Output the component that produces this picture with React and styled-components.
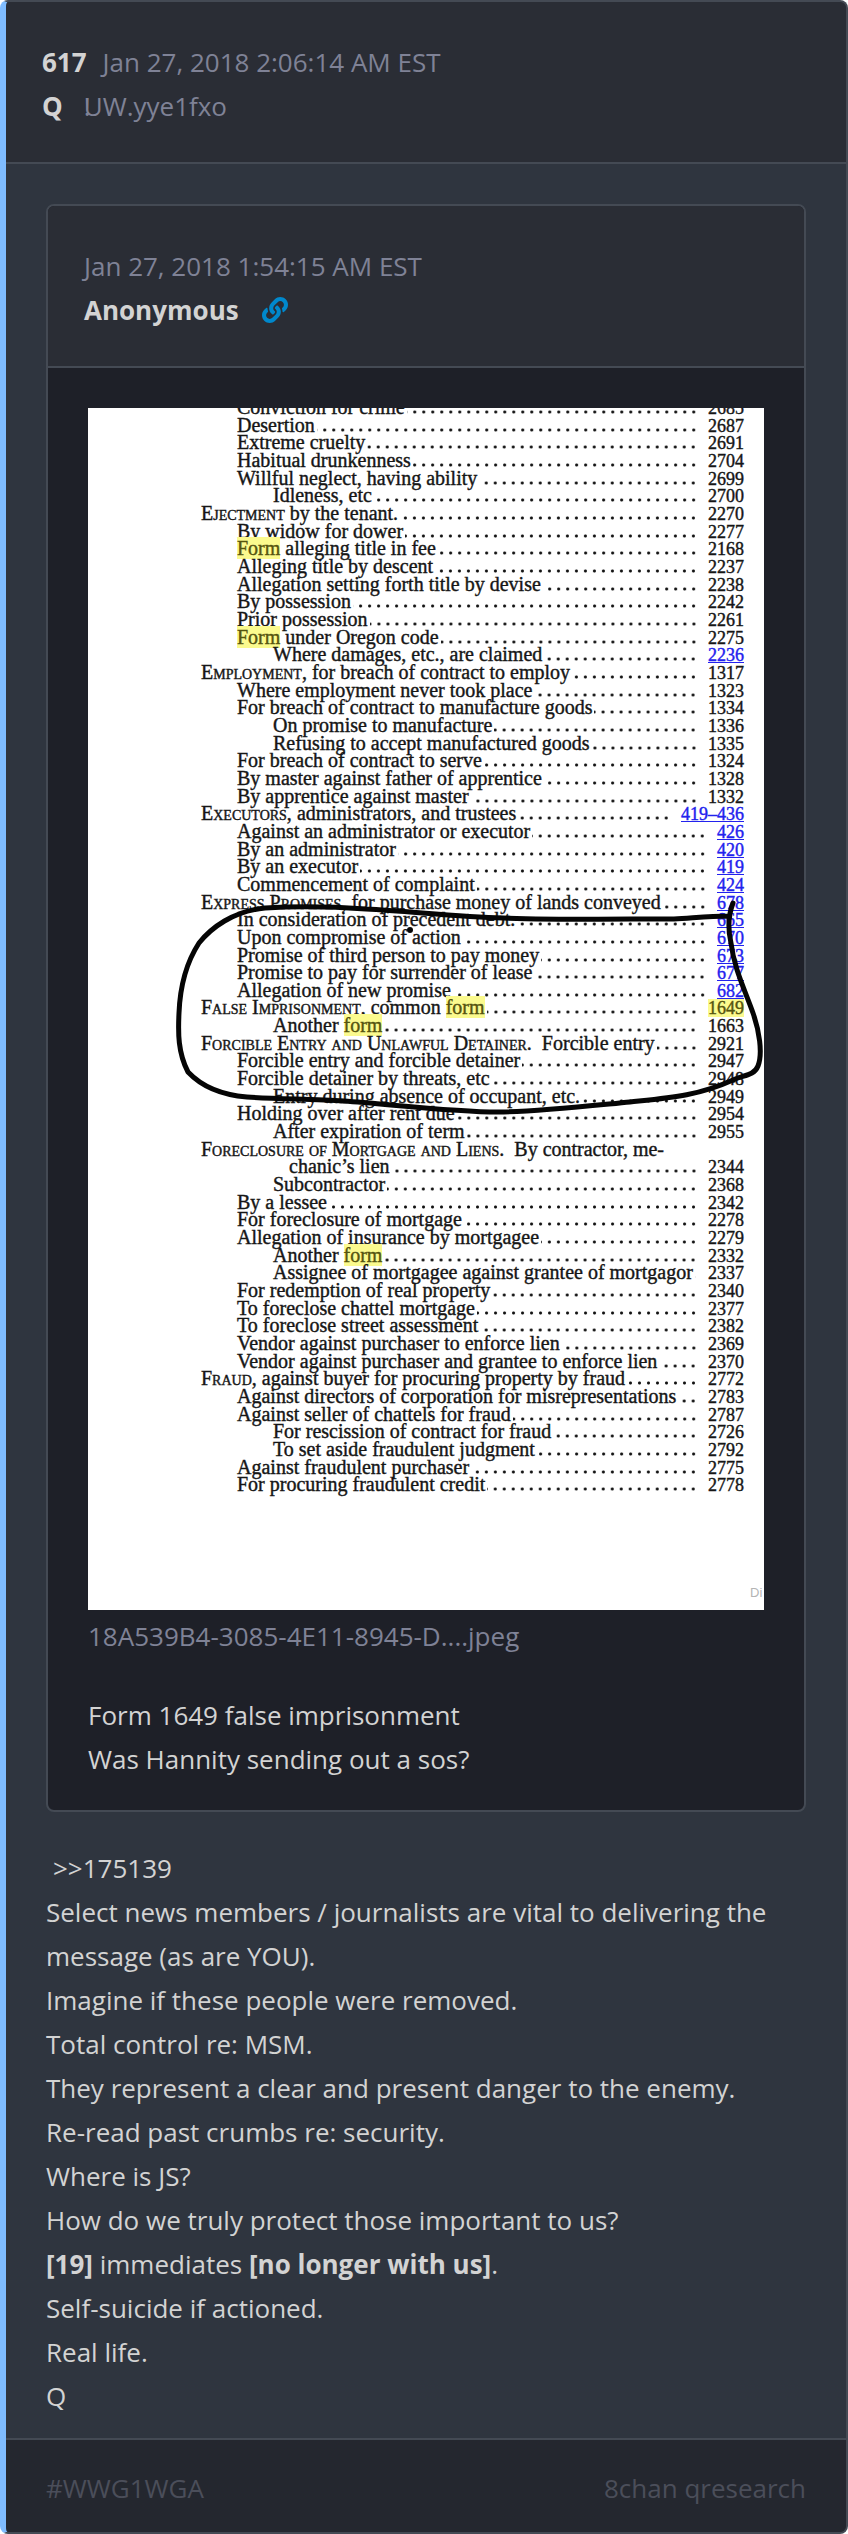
import React from "react";
import styled, { createGlobalStyle, css } from "styled-components";
import { FaLink } from "react-icons/fa";

const line = "#444a54";

const GlobalStyle = createGlobalStyle`
  *, *::before, *::after { box-sizing: border-box; }
  body {
    margin: 0;
    background: #fff;
    color: #d3d3d3;
    font-family: "Open Sans", "Noto Sans", sans-serif;
    font-size: 26px;
    line-height: 44px;
  }
`;

const Post = styled.article`
  border: 2px solid ${line};
  border-left: 6px solid #7fbcff;
  border-radius: 8px;
  background: #2f353f;
  overflow: hidden;
`;

const Header = styled.header`
  padding: 38px 36px 34px;
  background: #2a2d35;
  border-bottom: 2px solid ${line};
`;

const HeaderLine = styled.div`
  display: flex;
  align-items: center;
  gap: ${(p) => p.$gap || 0}px;
`;

const Tripcode = styled.span`
  color: #7f8296;
`;

const Bang = styled.span`
  display: inline-block;
  width: 0;
`;

const Time = styled.time`
  color: #7f8296;
`;

const SourceLink = styled.a`
  display: flex;
  color: #0088cc;
`;

const Body = styled.div`
  padding: 40px 40px 20px;
`;

const Quote = styled.section`
  border: 2px solid ${line};
  border-radius: 8px;
  background: #1e2028;
  overflow: hidden;
  margin-bottom: 34px;
`;

const QuoteBody = styled.div`
  padding: 40px 40px 29px;
`;

const Figure = styled.figure`
  margin: 0 0 35px;
`;

const Caption = styled.figcaption`
  padding-top: 4px;
  color: #7f8296;
`;

const Text = styled.p`
  margin: 0;
`;

const Reference = styled.span`
  padding-left: 7px;
`;

const Footer = styled.footer`
  display: flex;
  justify-content: space-between;
  padding: 26px 40px 22px;
  background: #24272f;
  border-top: 2px solid ${line};
  color: #4b4e5a;
`;

const Sheet = styled.div`
  position: relative;
  display: flex;
  flex-direction: column;
  height: 1202px;
  overflow: hidden;
  background: #fff;
  color: #161616;
  font-family: "Liberation Serif", serif;
  font-size: 18px;
  line-height: 18px;
`;

const Index = styled.ol`
  display: grid;
  grid-template-rows: repeat(62, 1fr);
  height: 1095px;
  margin: -10px 0 0;
  padding: 0 20px 0 113px;
  list-style: none;
`;

const indents = [0, 36, 72, 88];

const Entry = styled.li`
  display: flex;
  align-items: baseline;
  min-height: 0;
  padding-left: ${(p) => indents[p.$level]}px;
  white-space: nowrap;
  -webkit-text-stroke: 0.4px currentColor;
`;

const Title = styled.span`
  font-size: 20px;
`;

const Leader = styled.span`
  flex: 1;
  align-self: stretch;
  margin: 0 10px 0 2px;
  ${(p) =>
    !p.$blank &&
    css`
      background: radial-gradient(circle, #111 1px, transparent 2px) right 11px / 9px 6px repeat-x;
    `}
`;

const Caps = styled.span`
  font-variant: small-caps;
`;

const Mark = styled.mark`
  background: #fbfa8e;
  color: #55540f;
`;

const PageLink = styled.a`
  color: #2222ee;
`;

const Ink = styled.svg`
  position: absolute;
  top: 0;
  left: 0;
`;

const Watermark = styled.span`
  align-self: flex-end;
  width: 14px;
  margin: auto 0 8px;
  color: #b4b4b4;
  font-family: "Liberation Sans", sans-serif;
  font-size: 13px;
`;

const entries = [
  [1, "Conviction for crime", "2685"],
  [1, "Desertion", "2687"],
  [1, "Extreme cruelty", "2691"],
  [1, "Habitual drunkenness", "2704"],
  [1, "Willful neglect, having ability", "2699"],
  [2, "Idleness, etc", "2700"],
  [0, <><Caps>Ejectment</Caps> by the tenant.</>, "2270"],
  [1, "By widow for dower", "2277"],
  [1, <><Mark>Form</Mark> alleging title in fee</>, "2168"],
  [1, "Alleging title by descent", "2237"],
  [1, "Allegation setting forth title by devise", "2238"],
  [1, "By possession", "2242"],
  [1, "Prior possession", "2261"],
  [1, <><Mark>Form</Mark> under Oregon code</>, "2275"],
  [2, "Where damages, etc., are claimed", "2236", "link"],
  [0, <><Caps>Employment,</Caps> for breach of contract to employ</>, "1317"],
  [1, "Where employment never took place", "1323"],
  [1, "For breach of contract to manufacture goods", "1334"],
  [2, "On promise to manufacture", "1336"],
  [2, "Refusing to accept manufactured goods", "1335"],
  [1, "For breach of contract to serve", "1324"],
  [1, "By master against father of apprentice", "1328"],
  [1, "By apprentice against master", "1332"],
  [0, <><Caps>Executors,</Caps> administrators, and trustees</>, "419–436", "link"],
  [1, "Against an administrator or executor", "426", "link"],
  [1, "By an administrator", "420", "link"],
  [1, "By an executor", "419", "link"],
  [1, "Commencement of complaint", "424", "link"],
  [0, <><Caps>Express Promises,</Caps> for purchase money of lands conveyed</>, "678", "link"],
  [1, "In consideration of precedent debt.", "665", "link"],
  [1, "Upon compromise of action", "670", "link"],
  [1, "Promise of third person to pay money", "673", "link"],
  [1, "Promise to pay for surrender of lease", "677", "link"],
  [1, "Allegation of new promise", "682", "link"],
  [0, <><Caps>False Imprisonment,</Caps> common <Mark>form</Mark></>, "1649", "mark"],
  [2, <>Another <Mark>form</Mark></>, "1663"],
  [0, <><Caps>Forcible Entry and Unlawful Detainer.</Caps>&nbsp; Forcible entry</>, "2921"],
  [1, "Forcible entry and forcible detainer", "2947"],
  [1, "Forcible detainer by threats, etc", "2948"],
  [2, "Entry during absence of occupant, etc.", "2949"],
  [1, "Holding over after rent due", "2954"],
  [2, "After expiration of term", "2955"],
  [0, <><Caps>Foreclosure of Mortgage and Liens.</Caps>&nbsp; By contractor, me-</>, ""],
  [3, "chanic’s lien", "2344"],
  [2, "Subcontractor", "2368"],
  [1, "By a lessee", "2342"],
  [1, "For foreclosure of mortgage", "2278"],
  [1, "Allegation of insurance by mortgagee", "2279"],
  [2, <>Another <Mark>form</Mark></>, "2332"],
  [2, "Assignee of mortgagee against grantee of mortgagor", "2337"],
  [1, "For redemption of real property", "2340"],
  [1, "To foreclose chattel mortgage", "2377"],
  [1, "To foreclose street assessment", "2382"],
  [1, "Vendor against purchaser to enforce lien", "2369"],
  [1, "Vendor against purchaser and grantee to enforce lien", "2370"],
  [0, <><Caps>Fraud,</Caps> against buyer for procuring property by fraud</>, "2772"],
  [1, "Against directors of corporation for misrepresentations", "2783"],
  [1, "Against seller of chattels for fraud", "2787"],
  [2, "For rescission of contract for fraud", "2726"],
  [2, "To set aside fraudulent judgment", "2792"],
  [1, "Against fraudulent purchaser", "2775"],
  [1, "For procuring fraudulent credit", "2778"],
];

function PageNumber({ kind, children }) {
  if (kind === "link") return <PageLink href="#page">{children}</PageLink>;
  if (kind === "mark") return <Mark>{children}</Mark>;
  return <span>{children}</span>;
}

function ScannedPage() {
  return (
    <Sheet>
      <Index>
        {entries.map(([level, title, page, kind], i) => (
          <Entry key={i} $level={level}>
            <Title>{title}</Title>
            <Leader $blank={!page} />
            <PageNumber kind={kind}>{page}</PageNumber>
          </Entry>
        ))}
      </Index>
      <Watermark>Di</Watermark>
      <Ink width="676" height="1202" viewBox="0 0 676 1202" fill="none" aria-hidden="true">
        <path
          d="M645 495 C640 508 640 522 643 535 C646 560 656 580 665 605 C671 622 675 645 670 658 C666 668 655 667 645 672 C610 688 580 690 542 694 C510 697 450 704 410 704 C365 704 300 696 256 693 C225 691 190 691 159 689 C135 687 115 680 100 664 C90 645 90 625 91 605 C92 580 98 555 111 535 C123 520 145 503 177 500 C210 498 250 499 278 501 C320 503 370 509 415 510 C470 512 530 511 586 511 C605 510 620 508 641 508"
          stroke="#050505"
          strokeWidth="5"
          strokeLinecap="round"
          strokeLinejoin="round"
        />
        <circle cx="322" cy="522" r="3" fill="#050505" />
      </Ink>
    </Sheet>
  );
}

export default function App() {
  return (
    <>
      <GlobalStyle />
      <Post>
        <Header>
          <HeaderLine $gap={16}>
            <strong>617</strong>
            <Time dateTime="2018-01-27T02:06:14-05:00">Jan 27, 2018 2:06:14 AM EST</Time>
          </HeaderLine>
          <HeaderLine $gap={21}>
            <strong>Q</strong>
            <Tripcode><Bang>!</Bang>UW.yye1fxo</Tripcode>
          </HeaderLine>
        </Header>
        <Body>
          <Quote>
            <Header>
              <HeaderLine>
                <Time dateTime="2018-01-27T01:54:15-05:00">Jan 27, 2018 1:54:15 AM EST</Time>
              </HeaderLine>
              <HeaderLine $gap={23}>
                <strong>Anonymous</strong>
                <SourceLink href="#175139" aria-label="Link to post">
                  <FaLink size={26} />
                </SourceLink>
              </HeaderLine>
            </Header>
            <QuoteBody>
              <Figure>
                <ScannedPage />
                <Caption>18A539B4-3085-4E11-8945-D....jpeg</Caption>
              </Figure>
              <Text>Form 1649 false imprisonment</Text>
              <Text>Was Hannity sending out a sos?</Text>
            </QuoteBody>
          </Quote>
          <Text><Reference>&gt;&gt;175139</Reference></Text>
          <Text>Select news members / journalists are vital to delivering the message (as are YOU).</Text>
          <Text>Imagine if these people were removed.</Text>
          <Text>Total control re: MSM.</Text>
          <Text>They represent a clear and present danger to the enemy.</Text>
          <Text>Re-read past crumbs re: security.</Text>
          <Text>Where is JS?</Text>
          <Text>How do we truly protect those important to us?</Text>
          <Text><strong>[19]</strong> immediates <strong>[no longer with us]</strong>.</Text>
          <Text>Self-suicide if actioned.</Text>
          <Text>Real life.</Text>
          <Text>Q</Text>
        </Body>
        <Footer>
          <span>#WWG1WGA</span>
          <span>8chan qresearch</span>
        </Footer>
      </Post>
    </>
  );
}
